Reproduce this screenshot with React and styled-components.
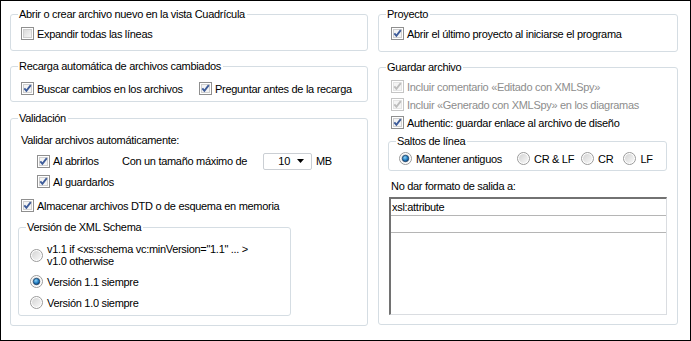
import React from "react";
import styled, { createGlobalStyle } from "styled-components";

const GlobalStyle = createGlobalStyle`
  html, body {
    margin: 0;
    padding: 0;
    background: #fff;
  }
  body {
    font-family: "Liberation Sans", Arial, sans-serif;
    font-size: 11px;
    letter-spacing: -0.3px;
    color: #000;
  }
`;

// Outer dialog page
const Frame = styled.div`
  width: 691px;
  height: 341px;
  box-sizing: border-box;
  border: 1px solid #000;
  background: #fff;
  display: grid;
  grid-template-columns: 358px 300px;
  column-gap: 10px;
  align-items: start;
  padding: 7px 0 0 9px;
`;

const Column = styled.div`
  display: flex;
  flex-direction: column;
`;

// Group box (Vista style)
const Group = styled.fieldset`
  margin: ${({ $mt }) => $mt || 0}px 0 0 ${({ $ml }) => $ml || 0}px;
  padding: ${({ $pt }) => $pt || 0}px 10px ${({ $pb }) => $pb || 0}px
    ${({ $pl }) => ($pl === undefined ? 10 : $pl)}px;
  border: 1px solid #d5dde3;
  border-radius: 3px;
  min-width: 0;
  box-sizing: border-box;
  height: ${({ $h }) => ($h ? `${$h}px` : "auto")};
  width: ${({ $w }) => ($w ? `${$w}px` : "auto")};
`;

const Legend = styled.legend`
  padding: 0 2px 0 1px;
  margin-left: ${({ $ml }) => ($ml === undefined ? -3 : $ml)}px;
  line-height: 13px;
`;

const Row = styled.label`
  display: flex;
  align-items: center;
  gap: 3px;
  height: 17px;
  box-sizing: border-box;
  margin-top: ${({ $mt }) => $mt || 0}px;
  padding-left: ${({ $indent }) => $indent || 0}px;
  color: ${({ $disabled }) => ($disabled ? "#8d8d8d" : "#000")};
  white-space: nowrap;
  width: ${({ $w }) => ($w ? `${$w}px` : "auto")};
  flex: none;
`;

const InlineRow = styled.div`
  display: flex;
  align-items: center;
  height: ${({ $h }) => $h || 17}px;
  margin-top: ${({ $mt }) => $mt || 0}px;
  white-space: nowrap;
`;

const Text = styled.div`
  line-height: 13px;
  margin-top: ${({ $mt }) => $mt || 0}px;
  white-space: nowrap;
`;

const SizeLabel = styled.span`
  width: 141px;
  flex: none;
`;

const Combo = styled.div`
  width: 49px;
  height: 17px;
  box-sizing: border-box;
  border: 1px solid #cbcfd4;
  border-radius: 2px;
  display: flex;
  align-items: center;
  justify-content: flex-end;
  gap: 7px;
  padding-right: 7px;
  flex: none;
`;

const Unit = styled.span`
  margin-left: 4px;
`;

const RadioLabel = styled.label`
  display: flex;
  align-items: center;
  gap: 4px;
  height: ${({ $h }) => $h || 17}px;
  margin-top: ${({ $mt }) => $mt || 0}px;
  margin-right: ${({ $mr }) => $mr || 0}px;
  white-space: nowrap;
  flex: none;
`;

const TwoLines = styled.span`
  display: flex;
  flex-direction: column;
  line-height: 12px;
`;

const RadioRow = styled.div`
  display: flex;
  align-items: center;
`;

const Table = styled.div`
  margin-top: 4px;
  margin-left: -2px;
  height: 118px;
  box-sizing: border-box;
  border-top: 2px solid #727272;
  border-left: 2px solid #727272;
  border-right: 1px solid #dadde1;
  border-bottom: 1px solid #dadde1;
`;

const TableRow = styled.div`
  height: ${({ $h }) => $h || 17}px;
  box-sizing: border-box;
  border-bottom: 1px solid #b5b5b5;
  padding-left: 1px;
  line-height: 16px;
`;

function CheckBox({ checked, disabled }) {
  const edge = disabled ? "#c5c5c5" : "#8f8f8f";
  const mark = disabled ? "#bdbdbd" : "#3e5c99";
  return (
    <svg width="13" height="13" viewBox="0 0 13 13" style={{ flex: "none" }}>
      <defs>
        <linearGradient id="cbIn" x1="0" y1="0" x2="1" y2="1">
          <stop offset="0" stopColor="#d8d8d8" />
          <stop offset="1" stopColor="#f7f7f7" />
        </linearGradient>
      </defs>
      <rect x="0.5" y="0.5" width="12" height="12" fill="#fff" stroke={edge} />
      <rect
        x="2.5"
        y="2.5"
        width="8"
        height="8"
        fill={checked ? "#f4f4f4" : "url(#cbIn)"}
        stroke={disabled ? "#e4e4e4" : "#cfcfcf"}
      />
      {checked && (
        <path
          d="M3.3 6.4 L5.4 8.8 L9.8 3.2"
          fill="none"
          stroke={mark}
          strokeWidth="1.9"
        />
      )}
    </svg>
  );
}

function Radio({ checked }) {
  return (
    <svg width="13" height="13" viewBox="0 0 13 13" style={{ flex: "none" }}>
      <defs>
        <linearGradient id="rdIn" x1="0" y1="0" x2="1" y2="1">
          <stop offset="0" stopColor="#d4d4d4" />
          <stop offset="1" stopColor="#f8f8f8" />
        </linearGradient>
        <radialGradient id="rdDot" cx="0.4" cy="0.35" r="0.7">
          <stop offset="0" stopColor="#8fd3f7" />
          <stop offset="0.6" stopColor="#1f7bc0" />
          <stop offset="1" stopColor="#0e3f70" />
        </radialGradient>
      </defs>
      <circle cx="6.5" cy="6.5" r="6" fill="#fff" stroke="#9a9a9a" />
      <circle cx="6.5" cy="6.5" r="4.5" fill="url(#rdIn)" />
      {checked && (
        <circle cx="6.5" cy="6.5" r="3.2" fill="url(#rdDot)" stroke="#1d3f63" strokeWidth="0.8" />
      )}
    </svg>
  );
}

function Arrow() {
  return (
    <svg width="7" height="4" viewBox="0 0 7 4">
      <path d="M0 0 H7 L3.5 4 Z" fill="#000" />
    </svg>
  );
}

export default function App() {
  return (
    <>
      <GlobalStyle />
      <Frame>
        <Column>
          <Group $pt={4} $pb={8}>
            <Legend>Abrir o crear archivo nuevo en la vista Cuadrícula</Legend>
            <Row>
              <CheckBox />
              Expandir todas las líneas
            </Row>
          </Group>

          <Group $mt={9} $pt={7} $pb={4}>
            <Legend>Recarga automática de archivos cambiados</Legend>
            <InlineRow>
              <Row $w={178}>
                <CheckBox checked />
                Buscar cambios en los archivos
              </Row>
              <Row>
                <CheckBox checked />
                Preguntar antes de la recarga
              </Row>
            </InlineRow>
          </Group>

          <Group $mt={10} $pt={9} $pb={10} $h={214}>
            <Legend>Validación</Legend>
            <Text>Validar archivos automáticamente:</Text>
            <InlineRow $mt={5} $h={18}>
              <Row $indent={16} $w={101}>
                <CheckBox checked />
                Al abrirlos
              </Row>
              <SizeLabel>Con un tamaño máximo de</SizeLabel>
              <Combo>
                10
                <Arrow />
              </Combo>
              <Unit>MB</Unit>
            </InlineRow>
            <Row $indent={16} $mt={3}>
              <CheckBox checked />
              Al guardarlos
            </Row>
            <Row $mt={7}>
              <CheckBox checked />
              Almacenar archivos DTD o de esquema en memoria
            </Row>
            <Group $mt={7} $ml={-3} $w={273} $pt={8} $pb={0} $pl={11} $h={95}>
              <Legend $ml={-4}>Versión de XML Schema</Legend>
              <RadioLabel $h={26}>
                <Radio />
                <TwoLines>
                  <span>v1.1 if &lt;xs:schema vc:minVersion="1.1" ... &gt;</span>
                  <span>v1.0 otherwise</span>
                </TwoLines>
              </RadioLabel>
              <RadioLabel $mt={5}>
                <Radio checked />
                Versión 1.1 siempre
              </RadioLabel>
              <RadioLabel $mt={4}>
                <Radio />
                Versión 1.0 siempre
              </RadioLabel>
            </Group>
          </Group>
        </Column>

        <Column>
          <Group $pt={4} $pb={9} $pl={12}>
            <Legend $ml={-5}>Proyecto</Legend>
            <Row>
              <CheckBox checked />
              Abrir el último proyecto al iniciarse el programa
            </Row>
          </Group>

          <Group $mt={9} $pt={4} $pb={8} $pl={12} $h={264}>
            <Legend $ml={-5}>Guardar archivo</Legend>
            <Row $disabled>
              <CheckBox checked disabled />
              Incluir comentario «Editado con XMLSpy»
            </Row>
            <Row $disabled $mt={1}>
              <CheckBox checked disabled />
              Incluir «Generado con XMLSpy» en los diagramas
            </Row>
            <Row $mt={1}>
              <CheckBox checked />
              Authentic: guardar enlace al archivo de diseño
            </Row>
            <Group $mt={4} $ml={-3} $pt={2} $pb={3} $pl={10}>
              <Legend $ml={-3}>Saltos de línea</Legend>
              <RadioRow>
                <RadioLabel $mr={15}>
                  <Radio checked />
                  Mantener antiguos
                </RadioLabel>
                <RadioLabel $mr={7}>
                  <Radio />
                  CR &amp; LF
                </RadioLabel>
                <RadioLabel $mr={10}>
                  <Radio />
                  CR
                </RadioLabel>
                <RadioLabel>
                  <Radio />
                  LF
                </RadioLabel>
              </RadioRow>
            </Group>
            <Text $mt={9}>No dar formato de salida a:</Text>
            <Table>
              <TableRow $h={17}>xsl:attribute</TableRow>
              <TableRow />
            </Table>
          </Group>
        </Column>
      </Frame>
    </>
  );
}
